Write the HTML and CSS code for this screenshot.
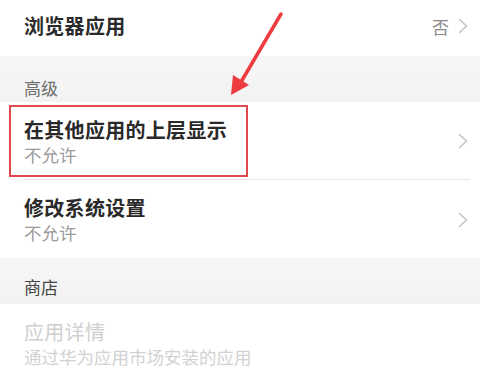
FILE: index.html
```html
<!DOCTYPE html>
<html lang="zh-CN">
<head>
<meta charset="utf-8">
<link rel="stylesheet" href="styles.css">
</head>
<body>
<div class="screen">
  <div class="row row-single">
    <div class="texts"><div class="title">浏览器应用</div></div>
    <div class="value">否</div>
    <svg class="chev" viewBox="0 0 10 16"><path d="M1.5 1.5 L8.5 8 L1.5 14.5" /></svg>
  </div>
  <div class="section"><span>高级</span></div>
  <div class="row row-double divided">
    <div class="texts"><div class="title">在其他应用的上层显示</div><div class="sub">不允许</div></div>
    <svg class="chev" viewBox="0 0 10 16"><path d="M1.5 1.5 L8.5 8 L1.5 14.5" /></svg>
  </div>
  <div class="row row-double">
    <div class="texts"><div class="title">修改系统设置</div><div class="sub">不允许</div></div>
    <svg class="chev" viewBox="0 0 10 16"><path d="M1.5 1.5 L8.5 8 L1.5 14.5" /></svg>
  </div>
  <div class="section section-dark"><span>商店</span></div>
  <div class="row row-double disabled">
    <div class="texts"><div class="title">应用详情</div><div class="sub">通过华为应用市场安装的应用</div></div>
  </div>
  <div class="footer"></div>

  <div class="highlight"></div>
  <svg class="arrow" viewBox="0 0 480 382" width="480" height="382">
    <line x1="281" y1="14" x2="241" y2="82" stroke="#ee3b3f" stroke-width="3.5" stroke-linecap="round"/>
    <polygon points="231,95 233,75 249,85" fill="#ee3b3f"/>
  </svg>
</div>
</body>
</html>
```
FILE: styles.css
```css
* { box-sizing: border-box; }
html, body { margin: 0; padding: 0; }
body {
  width: 480px;
  height: 382px;
  overflow: hidden;
  background: #ffffff;
  font-family: "Noto Sans CJK SC", "Noto Sans", sans-serif;
}
.screen {
  position: relative;
  width: 480px;
  height: 382px;
  display: flex;
  flex-direction: column;
}
.row {
  display: flex;
  align-items: center;
  padding-left: 24px;
  padding-right: 12px;
  background: #fff;
  position: relative;
}
.row-single { height: 56px; padding-bottom: 4px; }
.row-double { height: 78px; align-items: flex-start; }
.row-double .texts { padding-top: 16px; }
.divided::after {
  content: "";
  position: absolute;
  left: 24px;
  right: 10px;
  bottom: 0;
  height: 1px;
  background: #e6e6e6;
}
.texts { flex: 1; display: flex; flex-direction: column; }
.title {
  font-size: 20px;
  line-height: 24px;
  font-weight: 700;
  color: #2a2a2a;
  letter-spacing: 0.3px;
}
.sub {
  font-size: 17.5px;
  line-height: 24px;
  color: #9a9a9a;
  margin-top: 1px;
}
.value {
  font-size: 17px;
  color: #8a8a8a;
  margin-right: 9px;
}
.chev {
  width: 10px;
  height: 16px;
  flex: none;
  margin-right: 0;
}
.row-double .chev { margin-top: 32px; }
.row-double.divided .chev { margin-top: 31px; }
.chev path {
  fill: none;
  stroke: #c2c2c2;
  stroke-width: 1.5;
  stroke-linecap: round;
  stroke-linejoin: round;
}
.section {
  height: 46px;
  background: linear-gradient(#f7f7f7, #f2f2f2);
  padding-left: 24px;
  padding-top: 20px;
  font-size: 17px;
  line-height: 24px;
  color: #707070;
}
.section-dark { height: 46px; color: #444; padding-top: 17px; }
.disabled .title { color: #cfcfcf; font-weight: 400; }
.disabled .sub { color: #d2d2d2; }
.disabled .texts { padding-top: 16px; }
.footer { flex: 1; background: #f0f0f0; }
.highlight {
  position: absolute;
  left: 9px;
  top: 105px;
  width: 239px;
  height: 72px;
  border: 2px solid #e04a4e;
}
.arrow {
  position: absolute;
  left: 0;
  top: 0;
  pointer-events: none;
}
```
